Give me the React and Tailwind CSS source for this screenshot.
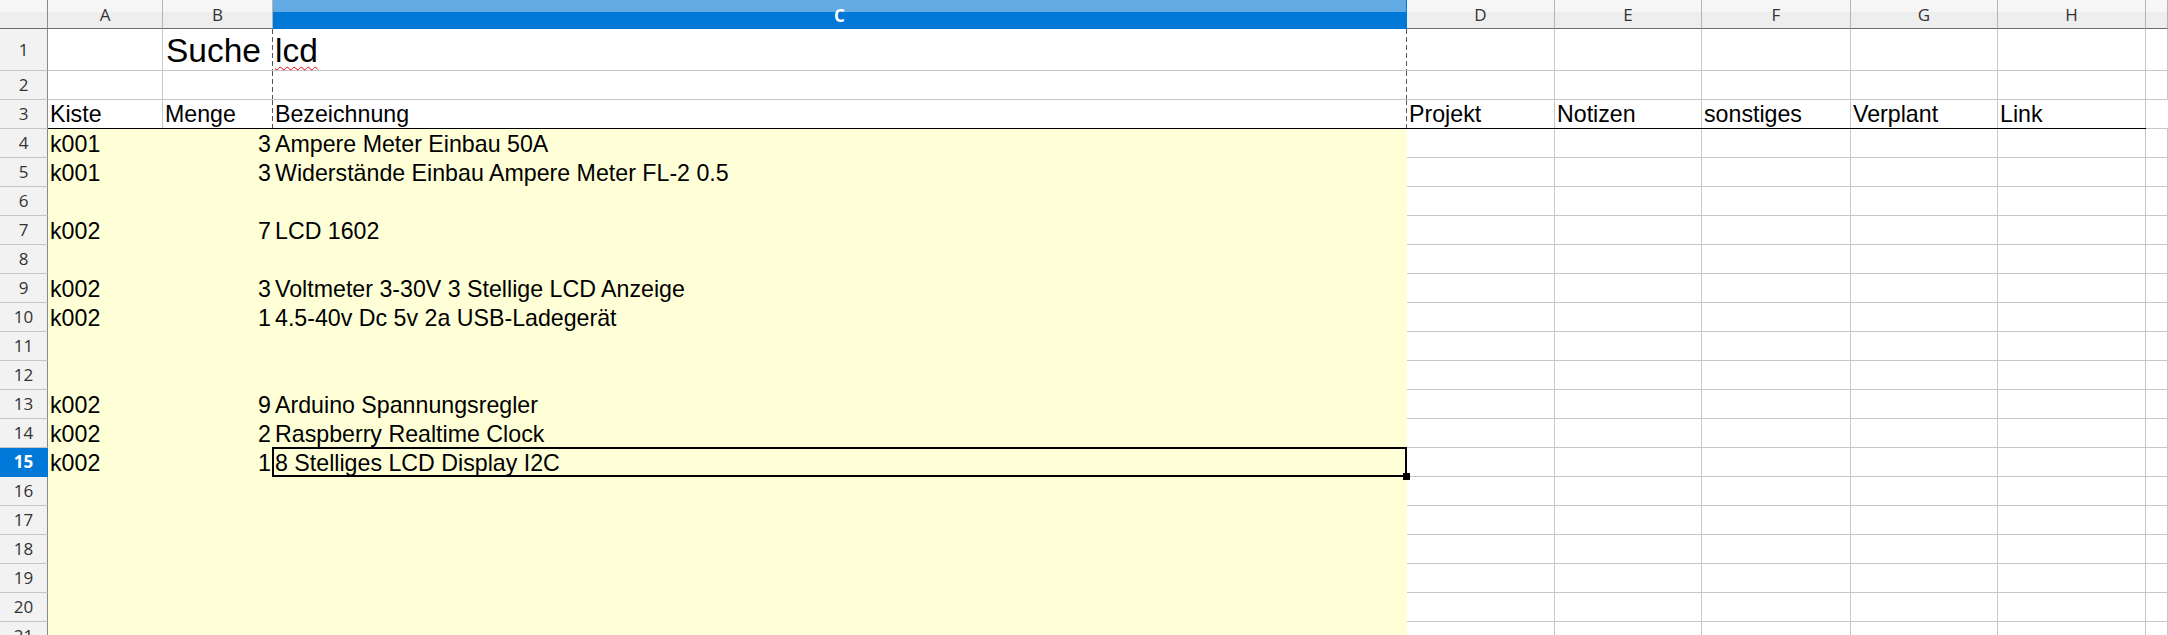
import React from 'react';

const FONT = { fontFamily: '"Liberation Sans", Arial, sans-serif' };
const UI = { fontFamily: '"Open Sans", "Noto Sans", sans-serif' };

const data = [
  [4, 'k001', '3', 'Ampere Meter Einbau 50A'],
  [5, 'k001', '3', 'Widerstände Einbau Ampere Meter FL-2 0.5'],
  [6],
  [7, 'k002', '7', 'LCD 1602'],
  [8],
  [9, 'k002', '3', 'Voltmeter 3-30V 3 Stellige LCD Anzeige'],
  [10, 'k002', '1', '4.5-40v Dc 5v 2a USB-Ladegerät'],
  [11],
  [12],
  [13, 'k002', '9', 'Arduino Spannungsregler'],
  [14, 'k002', '2', 'Raspberry Realtime Clock'],
  [15, 'k002', '1', '8 Stelliges LCD Display I2C'],
  [16],
  [17],
  [18],
  [19],
  [20],
  [21],
];

// widths of D..I
const rightCols = ['w-[148px]', 'w-[147px]', 'w-[149px]', 'w-[147px]', 'w-[148px]', 'flex-1'];
const headLetters = ['D', 'E', 'F', 'G', 'H', ''];

// page break line on the right edge of a cell (rows 1-3)
const dashed =
  'bg-[repeating-linear-gradient(to_bottom,#555_0,#555_5px,transparent_5px,transparent_8px)] bg-no-repeat bg-right bg-[length:1px_100%]';

function RowHead({ n, h, active }) {
  return (
    <div
      style={UI}
      className={`${h} w-[48px] shrink-0 flex items-center justify-center border-r border-b text-[17px] ${
        active
          ? 'bg-[#0078d7] text-white font-bold border-r-[#0078d7] border-b-[#0078d7]'
          : 'bg-[#f2f2f2] text-[#333] border-r-[#8a8a8a] border-b-[#c4c4c4]'
      }`}
    >
      {n}
    </div>
  );
}

function ColHead({ w, label, active }) {
  return (
    <div
      style={UI}
      className={`${w} h-[29px] shrink-0 flex items-end justify-center pb-[2px] text-[17px] leading-[22px] border-r ${
        active
          ? 'bg-[linear-gradient(to_bottom,#62aae3_0,#62aae3_12px,#0078d7_12px)] text-white font-bold border-r-[#0078d7]'
          : 'bg-[linear-gradient(to_bottom,#f6f6f6_0,#f6f6f6_12px,#eeeeee_12px)] text-[#333] border-r-[#b4b4b4] border-b border-b-[#6e6e6e]'
      }`}
    >
      {label}
    </div>
  );
}

function WhiteCells({ h, texts = [] }) {
  return rightCols.map((w, i) => (
    <div
      key={i}
      className={`${w} ${h} shrink-0 flex items-end px-[2px] border-r border-b border-[#c6c6c6] text-[23.2px] leading-[27px] text-black`}
    >
      {texts[i] || ''}
    </div>
  ));
}

export default function App() {
  return (
    <div style={FONT} className="w-[2168px] h-[635px] overflow-hidden bg-white select-none">
      {/* column headers */}
      <div className="flex">
        <div className="w-[48px] h-[29px] shrink-0 bg-[linear-gradient(to_bottom,#f6f6f6_0,#f6f6f6_12px,#eeeeee_12px)] border-r border-b border-r-[#8a8a8a] border-b-[#6e6e6e]" />
        <ColHead w="w-[115px]" label="A" />
        <ColHead w="w-[110px]" label="B" />
        <ColHead w="w-[1134px]" label="C" active />
        {rightCols.map((w, i) => (
          <ColHead key={i} w={w} label={headLetters[i]} />
        ))}
      </div>

      {/* row 1 */}
      <div className="flex">
        <RowHead n={1} h="h-[42px]" />
        <div className="w-[115px] h-[42px] shrink-0 border-r border-b border-[#c6c6c6]" />
        <div className={`w-[110px] h-[42px] shrink-0 flex items-end px-[3px] border-b border-b-[#c6c6c6] text-[33.5px] leading-[38px] ${dashed}`}>
          Suche
        </div>
        <div className={`w-[1134px] h-[42px] shrink-0 flex items-end px-[2px] border-b border-b-[#c6c6c6] text-[33.5px] leading-[38px] ${dashed}`}>
          <span className="underline decoration-wavy decoration-red-600 decoration-1 underline-offset-4">lcd</span>
        </div>
        <WhiteCells h="h-[42px]" />
      </div>

      {/* row 2 */}
      <div className="flex">
        <RowHead n={2} h="h-[29px]" />
        <div className="w-[115px] h-[29px] shrink-0 border-r border-b border-[#c6c6c6]" />
        <div className={`w-[110px] h-[29px] shrink-0 border-b border-b-[#c6c6c6] ${dashed}`} />
        <div className={`w-[1134px] h-[29px] shrink-0 border-b border-b-[#c6c6c6] ${dashed}`} />
        <WhiteCells h="h-[29px]" />
      </div>

      {/* row 3 - table head */}
      <div className="flex">
        <RowHead n={3} h="h-[29px]" />
        <div className="flex border-b border-black text-[23.2px] leading-[27px]">
          <div className="w-[115px] h-[28px] shrink-0 flex items-end px-[2px] border-r border-[#c6c6c6]">Kiste</div>
          <div className={`w-[110px] h-[28px] shrink-0 flex items-end px-[2px] ${dashed}`}>Menge</div>
          <div className={`w-[1134px] h-[28px] shrink-0 flex items-end px-[2px] ${dashed}`}>Bezeichnung</div>
          {['Projekt', 'Notizen', 'sonstiges', 'Verplant', 'Link'].map((t, i) => (
            <div
              key={t}
              className={`${rightCols[i]} h-[28px] shrink-0 flex items-end px-[2px] border-r border-[#c6c6c6]`}
            >
              {t}
            </div>
          ))}
        </div>
        <div className="flex-1 h-[29px] border-b border-[#c6c6c6]" />
      </div>

      {/* data rows */}
      {data.map(([n, kiste, menge, text]) => {
        const active = n === 15;
        return (
          <div key={n} className="flex">
            <RowHead n={n} h="h-[29px]" active={active} />
            <div className="flex bg-[#ffffd7] text-[23.2px] leading-[27px] text-black">
              <div className="w-[115px] h-[29px] flex items-end px-[2px]">{kiste}</div>
              <div className="w-[110px] h-[29px] flex items-end justify-end px-[2px]">{menge}</div>
              <div className="relative w-[1134px] h-[29px] flex items-end px-[2px]">
                {text}
                {active && (
                  <>
                    <div className="absolute -top-[1px] -left-[1px] right-0 bottom-0 border-2 border-black" />
                    <div className="absolute -right-[3px] -bottom-[3px] w-[7px] h-[7px] bg-black" />
                  </>
                )}
              </div>
            </div>
            <WhiteCells h="h-[29px]" />
          </div>
        );
      })}
    </div>
  );
}
